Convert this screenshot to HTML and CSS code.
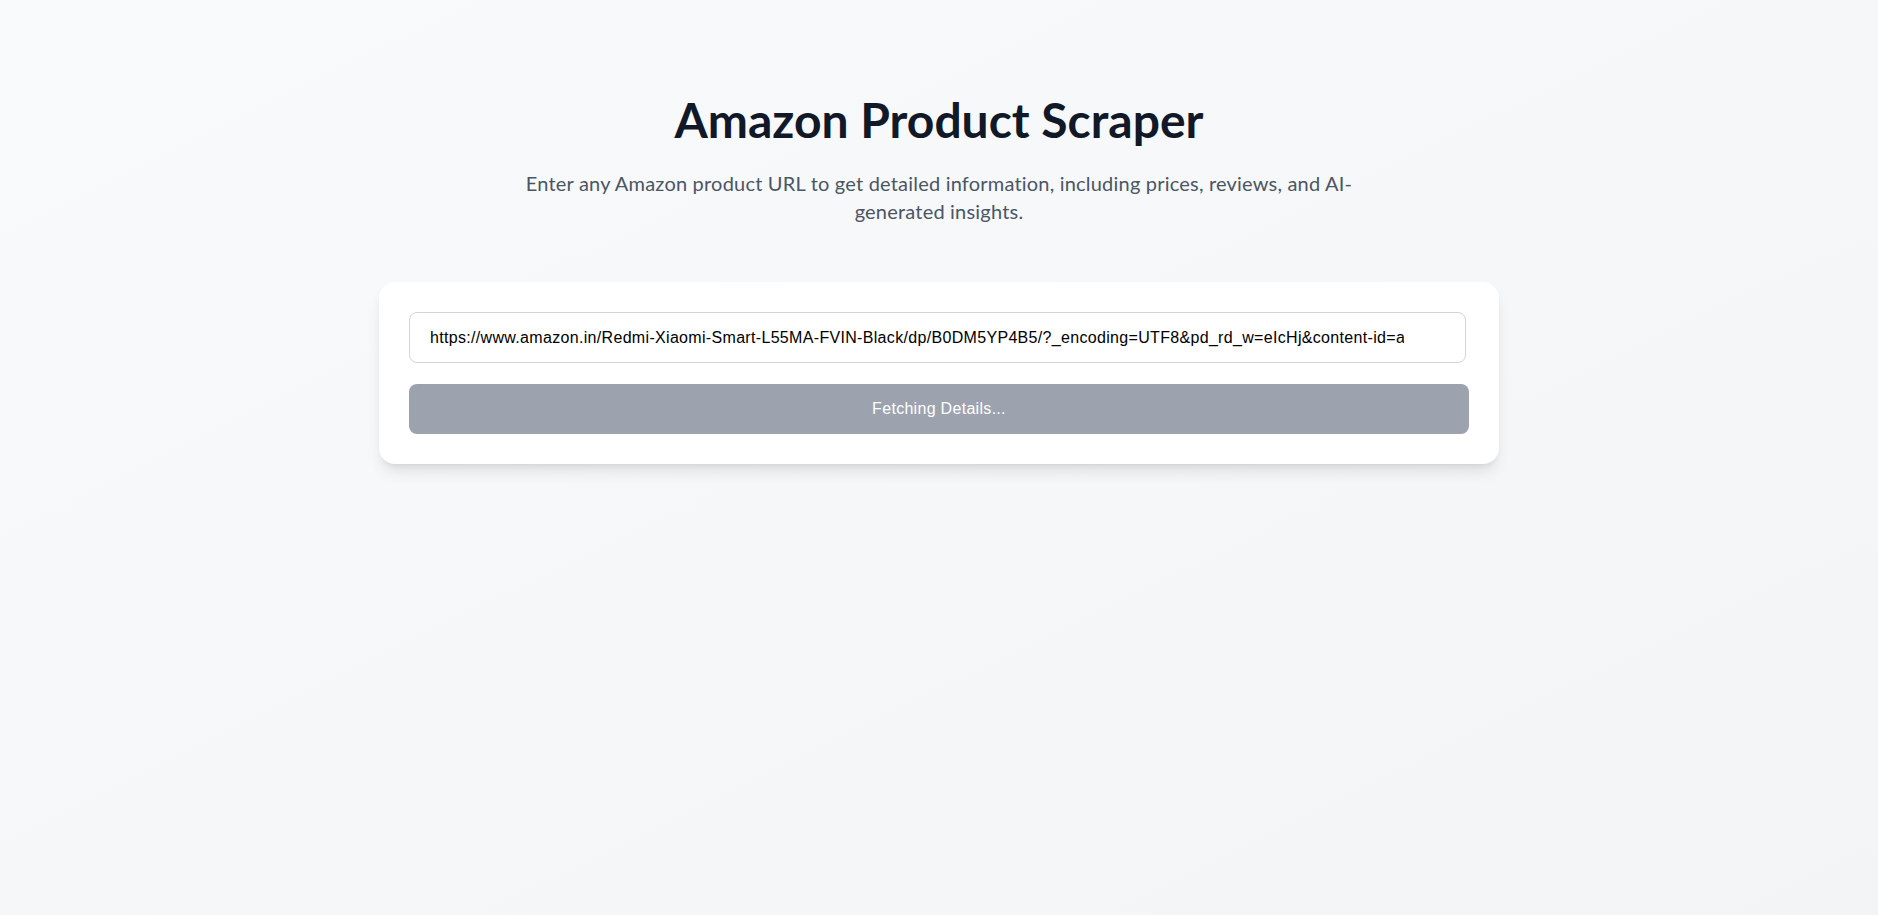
FILE: index.html
```html
<!DOCTYPE html>
<html lang="en">
<head>
<meta charset="utf-8">
<title>Amazon Product Scraper</title>
<link rel="stylesheet" href="styles.css">
</head>
<body>
<main class="page">
  <header class="hero">
    <h1 class="title">Amazon Product Scraper</h1>
    <p class="subtitle">Enter any Amazon product URL to get detailed information, including prices, reviews, and AI-generated insights.</p>
  </header>
  <section class="card">
    <form class="form">
      <input class="url-input" type="text" value="https://www.amazon.in/Redmi-Xiaomi-Smart-L55MA-FVIN-Black/dp/B0DM5YP4B5/?_encoding=UTF8&amp;pd_rd_w=eIcHj&amp;content-id=amzn1.sym.example">
      <button class="submit" type="button" disabled>Fetching Details...</button>
    </form>
  </section>
</main>
</body>
</html>
```

FILE: styles.css
```css
* { box-sizing: border-box; }
html, body { margin: 0; padding: 0; }
body {
  min-height: 100vh;
  background: linear-gradient(to bottom right, #f9fafb, #f3f4f6);
  font-family: Lato, "Noto Sans", sans-serif;
}
.page {
  width: 1120px;
  margin: 0 auto;
  padding-top: 96px;
}
.hero {
  text-align: center;
}
.title {
  margin: 0;
  font-size: 48px;
  line-height: 48px;
  font-weight: 700;
  color: #111827;
}
.subtitle {
  margin: 25px auto 0;
  max-width: 836px;
  font-size: 20px;
  line-height: 28px;
  letter-spacing: 0.2px;
  color: #4b5563;
}
.card {
  margin-top: 57px;
  background: #ffffff;
  border-radius: 16px;
  padding: 30px;
  box-shadow: 0 10px 15px -3px rgba(0,0,0,0.1), 0 4px 6px -4px rgba(0,0,0,0.1);
}
.form {
  display: flex;
  flex-direction: column;
  gap: 21px;
}
.url-input {
  width: calc(100% - 3px);
  height: 51px;
  border: 1px solid #d1d5db;
  border-radius: 8px;
  padding: 0 61px 0 20px;
  font-family: "Liberation Sans", Arial, sans-serif;
  font-size: 16px;
  letter-spacing: 0.32px;
  color: #000000;
  background: #ffffff;
  outline: none;
}
.submit {
  width: 100%;
  height: 50px;
  border: none;
  border-radius: 8px;
  background: #9ca3af;
  color: #ffffff;
  font-family: "Liberation Sans", Arial, sans-serif;
  font-size: 16px;
  letter-spacing: 0.3px;
  cursor: not-allowed;
}
```
